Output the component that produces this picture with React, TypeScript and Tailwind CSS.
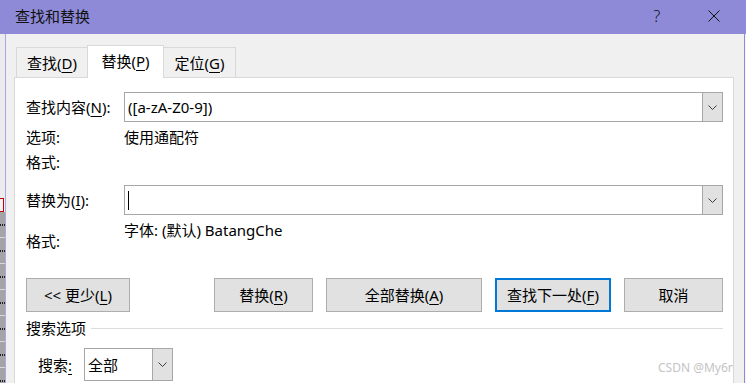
import React from "react";

function Chevron() {
  return (
    <svg width="9" height="5" viewBox="0 0 9 5" className="block">
      <path d="M0.5 0.5 L4.5 4.5 L8.5 0.5" stroke="#3c3c3c" strokeWidth="1" fill="none" />
    </svg>
  );
}

function Combo({ children, className }: { children?: React.ReactNode; className?: string }) {
  return (
    <div className={"flex border border-[#a7a7ab] bg-white " + (className ?? "")}>
      <div className="flex-1 flex items-center pl-[3px] min-w-0">{children}</div>
      <div className="w-[20px] border-l border-[#a7a7ab] bg-[#e1e1e1] flex items-center justify-center">
        <Chevron />
      </div>
    </div>
  );
}

function Btn({ children, w, focus }: { children: React.ReactNode; w: string; focus?: boolean }) {
  return (
    <div
      className={
        "h-[34px] flex items-center justify-center bg-[#e1e1e1] " +
        w +
        (focus ? " border-2 border-[#0078d7]" : " border border-[#adadad]")
      }
    >
      {children}
    </div>
  );
}

const U = ({ c }: { c: string }) => <span className="underline underline-offset-[3px] decoration-1">{c}</span>;

export default function App() {
  const blocks = [0, 1, 2, 3, 4, 5, 6];
  return (
    <div className="w-[746px] h-[383px] overflow-hidden flex flex-col bg-[#f0f0f0] text-[15px] leading-[20px] text-black font-[family-name:'Noto_Sans','Noto_Sans_CJK_SC',sans-serif] relative">
      {/* Title bar */}
      <div className="h-[34px] shrink-0 bg-[#8e8ad8] flex items-center pb-[2px] text-[#111]">
        <span className="ml-[15px]">查找和替换</span>
        <span className="ml-auto w-[16px] text-center text-[16px] font-light">?</span>
        <svg width="12" height="12" viewBox="0 0 12 12" className="ml-[43px] mr-[26px]">
          <path d="M0.5 0.5 L11.5 11.5 M11.5 0.5 L0.5 11.5" stroke="#111" strokeWidth="1" fill="none" />
        </svg>
      </div>

      <div className="flex flex-1 min-h-0">
        {/* background window strip */}
        <div className="w-[5px] shrink-0 flex flex-col">
          <div className="h-[164px] shrink-0 bg-[#ececec]" />
          <div className="h-[14px] shrink-0 w-[4px] border border-l-0 border-[#c00000] bg-[#f4f4f4]" />
          <div className="flex-1 bg-[#a4a4a4] flex flex-col">
            {blocks.map((b) => (
              <div key={b} className="h-[26px] shrink-0 border-b border-[#d8d8d8] flex items-center gap-[1px]">
                <div className="w-[1px] h-[2px] bg-[#222]" />
                <div className="w-[1px] h-[2px] bg-[#222]" />
                <div className="w-[1px] h-[2px] bg-[#222]" />
              </div>
            ))}
          </div>
        </div>
        <div className="w-px shrink-0 bg-[#aaa6e8]" />

        {/* dialog body */}
        <div className="flex-1 min-w-0 flex flex-col pl-[8px] pr-[10px] pt-[11px]">
          {/* tabs */}
          <div className="h-[32px] shrink-0 flex items-end pl-[2px] relative z-10">
            <div className="w-[71px] h-[30px] border-l border-t border-[#d9d9d9] flex items-center justify-center">
              查找(<U c="D" />)
            </div>
            <div className="w-[77px] h-[33px] -mb-px bg-white border border-b-0 border-[#d9d9d9] flex items-center justify-center pb-[2px]">
              替换(<U c="P" />)
            </div>
            <div className="w-[72px] h-[30px] border-t border-r border-[#d9d9d9] flex items-center justify-center">
              定位(<U c="G" />)
            </div>
          </div>

          {/* panel */}
          <div className="h-[330px] shrink-0 bg-white border border-[#d9d9d9] flex flex-col pl-[11px] pr-[10px] pt-[14px] relative overflow-hidden">
            <div className="h-[30px] flex items-center">
              <div className="w-[98px]">
                查找内容(<U c="N" />):
              </div>
              <Combo className="flex-1 h-[30px]">
                <span>([a-zA-Z0-9])</span>
              </Combo>
            </div>
            <div className="h-[20px] mt-[5px] flex items-center">
              <div className="w-[98px]">选项:</div>
              <div>使用通配符</div>
            </div>
            <div className="h-[20px] mt-[5px] flex items-center">
              <div className="w-[98px]">格式:</div>
            </div>
            <div className="h-[30px] mt-[13px] flex items-center">
              <div className="w-[98px]">
                替换为(<U c="I" />):
              </div>
              <Combo className="flex-1 h-[30px]">
                <div className="w-px h-[19px] bg-black" />
              </Combo>
            </div>
            <div className="mt-[5px] flex items-start">
              <div className="w-[98px] mt-[11px]">格式:</div>
              <div>字体: (默认) BatangChe</div>
            </div>

            <div className="mt-[27px] flex items-center">
              <Btn w="w-[104px]">
                &lt;&lt; 更少(<U c="L" />)
              </Btn>
              <div className="ml-auto flex gap-[13px]">
                <Btn w="w-[99px]">
                  替换(<U c="R" />)
                </Btn>
                <Btn w="w-[156px]">
                  全部替换(<U c="A" />)
                </Btn>
                <Btn w="w-[116px]" focus>
                  查找下一处(<U c="F" />)
                </Btn>
                <Btn w="w-[99px]">取消</Btn>
              </div>
            </div>

            <div className="h-[20px] mt-[6px] flex items-center">
              <span>搜索选项</span>
              <div className="flex-1 h-px bg-[#dcdcdc] ml-[5px]" />
            </div>

            <div className="h-[33px] mt-[10px] flex items-center pl-[12px]">
              <div className="w-[46px]">
                搜索<span className="underline underline-offset-[3px] decoration-1">:</span>
              </div>
              <Combo className="w-[89px] h-[33px]">
                <span>全部</span>
              </Combo>
            </div>

            <div className="absolute left-[643px] top-[283px] text-[12px] leading-[14px] text-[#c4c4c4] whitespace-nowrap">
              CSDN @My6n
            </div>
          </div>
        </div>

        <div className="w-px shrink-0 bg-[#8e8ad8]" />
        <div className="w-px shrink-0 bg-[#f4f4f4]" />
      </div>
    </div>
  );
}
